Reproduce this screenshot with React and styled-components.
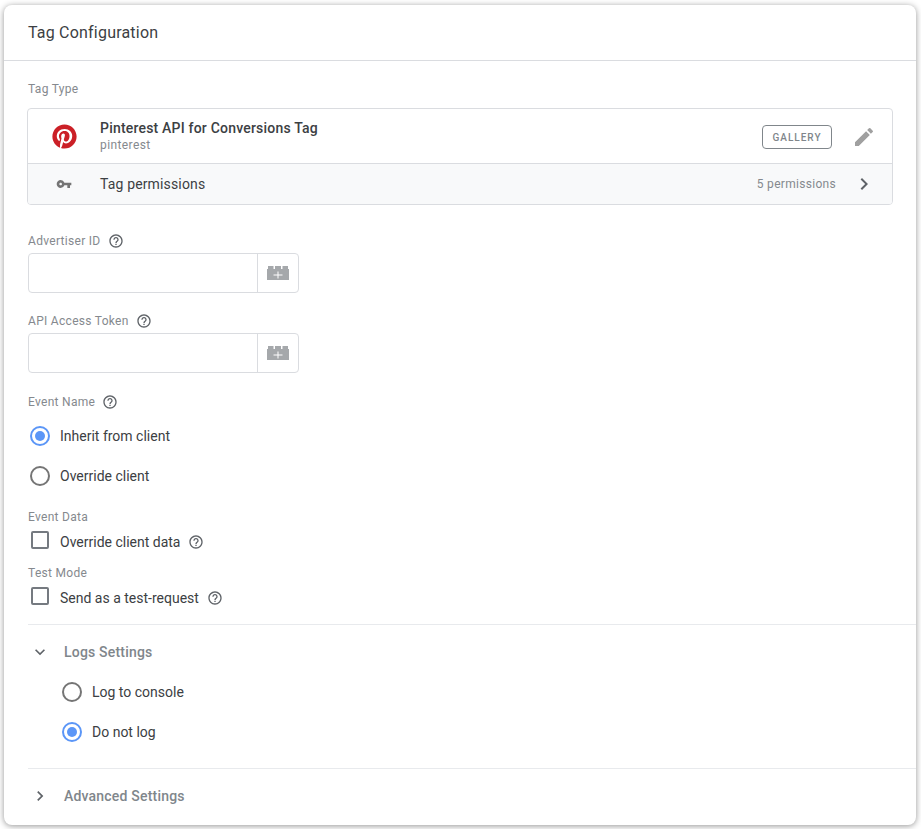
import React from 'react';
import styled, { createGlobalStyle } from 'styled-components';
import { FaPinterest } from 'react-icons/fa';
import { MdVpnKey, MdEdit, MdChevronRight, MdExpandMore, MdHelpOutline } from 'react-icons/md';

const GlobalStyle = createGlobalStyle`
  html, body {
    margin: 0;
    padding: 0;
    background: #fff;
  }
  body {
    font-family: Roboto, "Liberation Sans", sans-serif;
    -webkit-font-smoothing: antialiased;
  }
`;

const Page = styled.div`
  width: 921px;
  height: 829px;
  padding: 5px 5px 4px 4px;
  box-sizing: border-box;
  overflow: hidden;
  background: #fff;
`;

const Card = styled.div`
  height: 820px;
  background: #fff;
  border-radius: 8px;
  box-shadow: 0 1px 6px rgba(0, 0, 0, 0.42);
  overflow: hidden;
`;

const CardHeader = styled.div`
  height: 55px;
  padding: 0 24px;
  display: flex;
  align-items: center;
  border-bottom: 1px solid #dadce0;
  font-size: 16px;
  color: #3c4043;
  letter-spacing: 0.2px;
`;

const CardBody = styled.div`
  padding: 0 24px;
`;

const Label = styled.div`
  display: flex;
  align-items: center;
  gap: 7px;
  height: 16px;
  font-size: 12px;
  letter-spacing: 0.3px;
  color: #85898e;
  margin-top: ${({ $top }) => $top}px;
`;

const TypeBox = styled.div`
  margin: 11px 0 0 -1px;
  width: 866px;
  box-sizing: border-box;
  border: 1px solid #dadce0;
  border-radius: 4px;
  overflow: hidden;
`;

const TypeRow = styled.div`
  display: flex;
  align-items: center;
  height: 54px;
`;

const PermissionRow = styled.div`
  display: flex;
  align-items: center;
  height: 40px;
  background: #f8f9fa;
  border-top: 1px solid #dadce0;
`;

const IconSlot = styled.div`
  width: 72px;
  display: flex;
  justify-content: center;
  color: ${({ $color }) => $color};
`;

const TypeInfo = styled.div`
  flex: 1;
`;

const TypeName = styled.div`
  font-size: 14px;
  font-weight: 500;
  letter-spacing: 0.2px;
  line-height: 17px;
  color: #3c4043;
`;

const TypeOwner = styled.div`
  font-size: 12px;
  letter-spacing: 0.4px;
  line-height: 16px;
  color: #85898e;
`;

const Badge = styled.div`
  width: 70px;
  height: 24px;
  margin-top: 1px;
  padding-top: 1px;
  box-sizing: border-box;
  border: 1px solid #80868b;
  border-radius: 4px;
  display: flex;
  align-items: center;
  justify-content: center;
  font-size: 10px;
  font-weight: 500;
  letter-spacing: 1px;
  color: #80868b;
`;

const EditButton = styled.div`
  width: 56px;
  padding-left: 4px;
  margin-top: 1px;
  display: flex;
  justify-content: center;
  color: #a0a0a0;
`;

const PermissionText = styled.div`
  flex: 1;
  font-size: 14px;
  letter-spacing: 0.15px;
  color: #3c4043;
`;

const PermissionCount = styled.div`
  font-size: 12px;
  letter-spacing: 0.3px;
  color: #85898e;
`;

const ChevronSlot = styled.div`
  width: 56px;
  display: flex;
  justify-content: center;
  color: #5f6368;
`;

const VariableField = styled.div`
  display: flex;
  width: 271px;
  height: 40px;
  box-sizing: border-box;
  margin-top: 4px;
  border: 1px solid #dadce0;
  border-radius: 4px;
`;

const TextInput = styled.div`
  flex: 1;
`;

const VariableButton = styled.div`
  width: 41px;
  box-sizing: border-box;
  border-left: 1px solid #dadce0;
  display: flex;
  align-items: center;
  justify-content: center;
`;

const OptionGroup = styled.div`
  margin-top: ${({ $top }) => $top}px;
`;

const OptionRow = styled.div`
  display: flex;
  align-items: center;
  height: 40px;
  gap: 10px;
  font-size: 14px;
  color: #3c4043;
  padding-left: ${({ $indent }) => $indent || 2}px;
`;

const RadioRing = styled.span`
  width: 20px;
  height: 20px;
  box-sizing: border-box;
  border-radius: 50%;
  border: 2px solid ${({ $on }) => ($on ? '#5b96f7' : '#757575')};
  display: flex;
  align-items: center;
  justify-content: center;
  &::after {
    content: '';
    width: 10px;
    height: 10px;
    border-radius: 50%;
    background: ${({ $on }) => ($on ? '#5b96f7' : 'transparent')};
  }
`;

const CheckRow = styled.div`
  display: flex;
  align-items: center;
  height: 24px;
  margin-top: 5px;
  padding-left: 3px;
  font-size: 14px;
  color: #3c4043;
`;

const CheckBox = styled.span`
  width: 18px;
  height: 18px;
  box-sizing: border-box;
  border: 2px solid #757a80;
  border-radius: 2px;
  margin: -4px 11px 0 0;
`;

const HelpIcon = styled(MdHelpOutline)`
  width: 16px;
  height: 16px;
  color: #5f6368;
  margin-left: ${({ $gap }) => $gap || 0}px;
`;

const SectionRule = styled.div`
  height: 1px;
  background: #e8eaed;
  margin: ${({ $top }) => $top}px 0 0 24px;
`;

const SectionHead = styled.div`
  display: flex;
  align-items: center;
  height: 54px;
  padding-left: 26px;
  font-size: 14px;
  font-weight: 500;
  letter-spacing: 0.2px;
  color: #80868b;
`;

const SectionChevron = styled.span`
  width: 34px;
  display: flex;
  color: #5f6368;
`;

const VariableIcon = () => (
  <svg width="24" height="14" viewBox="0 0 24 14">
    <path
      fill="#a5a8ab"
      fillRule="evenodd"
      d="M1 3h1V0h5.500v3H9V0h6v3h1.500V0H22v3h1v11H1z M11.500 5.500v3H7.500v1h4v3h1v-3h4v-1h-4v-3z"
    />
  </svg>
);

const Radio = ({ on, label, indent }) => (
  <OptionRow $indent={indent}>
    <RadioRing $on={on} />
    {label}
  </OptionRow>
);

export default function App() {
  return (
    <Page>
      <GlobalStyle />
      <Card>
        <CardHeader>Tag Configuration</CardHeader>
        <CardBody>
          <Label $top={20}>Tag Type</Label>
          <TypeBox>
            <TypeRow>
              <IconSlot $color="#cb2027">
                <FaPinterest size={25} />
              </IconSlot>
              <TypeInfo>
                <TypeName>Pinterest API for Conversions Tag</TypeName>
                <TypeOwner>pinterest</TypeOwner>
              </TypeInfo>
              <Badge>GALLERY</Badge>
              <EditButton>
                <MdEdit size={24} />
              </EditButton>
            </TypeRow>
            <PermissionRow>
              <IconSlot $color="#757575">
                <MdVpnKey size={16} />
              </IconSlot>
              <PermissionText>Tag permissions</PermissionText>
              <PermissionCount>5 permissions</PermissionCount>
              <ChevronSlot>
                <MdChevronRight size={24} />
              </ChevronSlot>
            </PermissionRow>
          </TypeBox>

          <Label $top={28}>
            Advertiser ID <HelpIcon />
          </Label>
          <VariableField>
            <TextInput />
            <VariableButton>
              <VariableIcon />
            </VariableButton>
          </VariableField>

          <Label $top={20}>
            API Access Token <HelpIcon />
          </Label>
          <VariableField>
            <TextInput />
            <VariableButton>
              <VariableIcon />
            </VariableButton>
          </VariableField>

          <Label $top={21}>
            Event Name <HelpIcon />
          </Label>
          <OptionGroup $top={6}>
            <Radio on label="Inherit from client" />
            <Radio label="Override client" />
          </OptionGroup>

          <Label $top={13}>Event Data</Label>
          <CheckRow>
            <CheckBox />
            Override client data
            <HelpIcon $gap={8} />
          </CheckRow>

          <Label $top={11}>Test Mode</Label>
          <CheckRow>
            <CheckBox />
            Send as a test-request
            <HelpIcon $gap={8} />
          </CheckRow>
        </CardBody>

        <SectionRule $top={14} />
        <SectionHead>
          <SectionChevron>
            <MdExpandMore size={20} />
          </SectionChevron>
          Logs Settings
        </SectionHead>
        <OptionGroup $top={-7}>
          <Radio indent={58} label="Log to console" />
          <Radio indent={58} on label="Do not log" />
        </OptionGroup>
        <SectionRule $top={16} />
        <SectionHead>
          <SectionChevron>
            <MdChevronRight size={20} />
          </SectionChevron>
          Advanced Settings
        </SectionHead>
      </Card>
    </Page>
  );
}
